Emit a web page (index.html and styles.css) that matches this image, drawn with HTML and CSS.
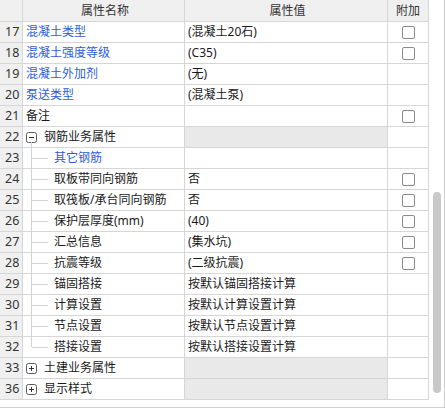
FILE: index.html
```html
<!DOCTYPE html>
<html lang="zh-CN">

<head>
  <meta charset="UTF-8">
  <meta name="viewport" content="width=device-width, initial-scale=1.0">
  <title>属性编辑器</title>
  <link rel="stylesheet" href="styles.css">
</head>

<body>
  <div class="panel">
    <div class="grid">
      <div class="row head">
        <div class="cell no"></div>
        <div class="cell name">属性名称</div>
        <div class="cell value">属性值</div>
        <div class="cell add">附加</div>
      </div>

      <div class="row">
        <div class="cell no">17</div>
        <div class="cell name blue">混凝土类型</div>
        <div class="cell value">(混凝土20石)</div>
        <div class="cell add"><span class="check"></span></div>
      </div>
      <div class="row">
        <div class="cell no">18</div>
        <div class="cell name blue">混凝土强度等级</div>
        <div class="cell value">(C35)</div>
        <div class="cell add"><span class="check"></span></div>
      </div>
      <div class="row">
        <div class="cell no">19</div>
        <div class="cell name blue">混凝土外加剂</div>
        <div class="cell value">(无)</div>
        <div class="cell add"></div>
      </div>
      <div class="row">
        <div class="cell no">20</div>
        <div class="cell name blue">泵送类型</div>
        <div class="cell value">(混凝土泵)</div>
        <div class="cell add"></div>
      </div>
      <div class="row">
        <div class="cell no">21</div>
        <div class="cell name">备注</div>
        <div class="cell value"></div>
        <div class="cell add"><span class="check"></span></div>
      </div>

      <div class="row">
        <div class="cell no">22</div>
        <div class="cell name group open">
          <svg class="toggle" width="11" height="11" viewBox="0 0 11 11">
            <rect x="0.5" y="0.5" width="10" height="10" rx="2" fill="#fff" stroke="#5a5a5a" />
            <path d="M3 5.5h5" stroke="#333" />
          </svg>
          钢筋业务属性
        </div>
        <div class="cell value shade"></div>
        <div class="cell add"></div>
      </div>
      <div class="row">
        <div class="cell no">23</div>
        <div class="cell name child blue">其它钢筋</div>
        <div class="cell value"></div>
        <div class="cell add"></div>
      </div>
      <div class="row">
        <div class="cell no">24</div>
        <div class="cell name child">取板带同向钢筋</div>
        <div class="cell value">否</div>
        <div class="cell add"><span class="check"></span></div>
      </div>
      <div class="row">
        <div class="cell no">25</div>
        <div class="cell name child">取筏板/承台同向钢筋</div>
        <div class="cell value">否</div>
        <div class="cell add"><span class="check"></span></div>
      </div>
      <div class="row">
        <div class="cell no">26</div>
        <div class="cell name child">保护层厚度(mm)</div>
        <div class="cell value">(40)</div>
        <div class="cell add"><span class="check"></span></div>
      </div>
      <div class="row">
        <div class="cell no">27</div>
        <div class="cell name child">汇总信息</div>
        <div class="cell value">(集水坑)</div>
        <div class="cell add"><span class="check"></span></div>
      </div>
      <div class="row">
        <div class="cell no">28</div>
        <div class="cell name child">抗震等级</div>
        <div class="cell value">(二级抗震)</div>
        <div class="cell add"><span class="check"></span></div>
      </div>
      <div class="row">
        <div class="cell no">29</div>
        <div class="cell name child">锚固搭接</div>
        <div class="cell value">按默认锚固搭接计算</div>
        <div class="cell add"></div>
      </div>
      <div class="row">
        <div class="cell no">30</div>
        <div class="cell name child">计算设置</div>
        <div class="cell value">按默认计算设置计算</div>
        <div class="cell add"></div>
      </div>
      <div class="row">
        <div class="cell no">31</div>
        <div class="cell name child">节点设置</div>
        <div class="cell value">按默认节点设置计算</div>
        <div class="cell add"></div>
      </div>
      <div class="row">
        <div class="cell no">32</div>
        <div class="cell name child last">搭接设置</div>
        <div class="cell value">按默认搭接设置计算</div>
        <div class="cell add"></div>
      </div>

      <div class="row">
        <div class="cell no">33</div>
        <div class="cell name group">
          <svg class="toggle" width="11" height="11" viewBox="0 0 11 11">
            <rect x="0.5" y="0.5" width="10" height="10" rx="2" fill="#fff" stroke="#5a5a5a" />
            <path d="M3 5.5h5M5.5 3v5" stroke="#333" />
          </svg>
          土建业务属性
        </div>
        <div class="cell value shade"></div>
        <div class="cell add"></div>
      </div>
      <div class="row">
        <div class="cell no">36</div>
        <div class="cell name group">
          <svg class="toggle" width="11" height="11" viewBox="0 0 11 11">
            <rect x="0.5" y="0.5" width="10" height="10" rx="2" fill="#fff" stroke="#5a5a5a" />
            <path d="M3 5.5h5M5.5 3v5" stroke="#333" />
          </svg>
          显示样式
        </div>
        <div class="cell value shade"></div>
        <div class="cell add"></div>
      </div>
    </div>

    <div class="scroll">
      <div class="thumb"></div>
    </div>
  </div>
</body>

</html>
```

FILE: styles.css
```css
* {
  padding: 0;
  margin: 0;
  box-sizing: border-box;
}

body {
  font-family: "Noto Sans", "Noto Sans CJK SC", sans-serif;
  font-size: 12px;
  color: #1a1a1a;
  background: #fff;
}

.panel {
  display: flex;
  width: 445px;
  height: 408px;
  border-right: 1px solid #cfcfcf;
  border-bottom: 1px solid #cfcfcf;
}

.grid {
  width: 429px;
}

.row {
  display: grid;
  grid-template-columns: 23px 162px 203px 41px;
  height: 21px;
}

.cell {
  display: flex;
  align-items: center;
  height: 100%;
  border-right: 1px solid #d6d6d6;
  border-bottom: 1px solid #d6d6d6;
  white-space: nowrap;
  line-height: 1;
}

.head {
  height: 22px;
  background: #f0f0f0;
  color: #333;
}

.head .cell {
  justify-content: center;
}

.no {
  background: #f0f0f0;
  color: #333;
  padding-left: 5px;
  font-size: 12.5px;
}

.name {
  position: relative;
  padding-left: 3px;
}

.value {
  padding-left: 3px;
}

.add {
  justify-content: center;
}

.blue {
  color: #2c5ed8;
}

.shade {
  background: #e9e9e9;
}

.group {
  padding-left: 3px;
}

.toggle {
  margin-right: 7px;
  flex: none;
}

.open::after {
  content: "";
  position: absolute;
  left: 8px;
  top: 15px;
  bottom: -1px;
  border-left: 1px solid #d2d2d2;
}

.child {
  padding-left: 31px;
}

.child::before {
  content: "";
  position: absolute;
  left: 8px;
  top: -1px;
  bottom: -1px;
  border-left: 1px solid #d2d2d2;
}

.child.last::before {
  bottom: 50%;
}

.child::after {
  content: "";
  position: absolute;
  left: 9px;
  top: 50%;
  width: 16px;
  border-top: 1px solid #d2d2d2;
}

.check {
  width: 13px;
  height: 13px;
  border: 1px solid #8a8a8a;
  border-radius: 2px;
  background: #fff;
}

.scroll {
  flex: 1;
  padding: 192px 3px 0 4px;
}

.thumb {
  width: 8px;
  height: 201px;
  border-radius: 4px;
  background: #c9c9c9;
}
```
